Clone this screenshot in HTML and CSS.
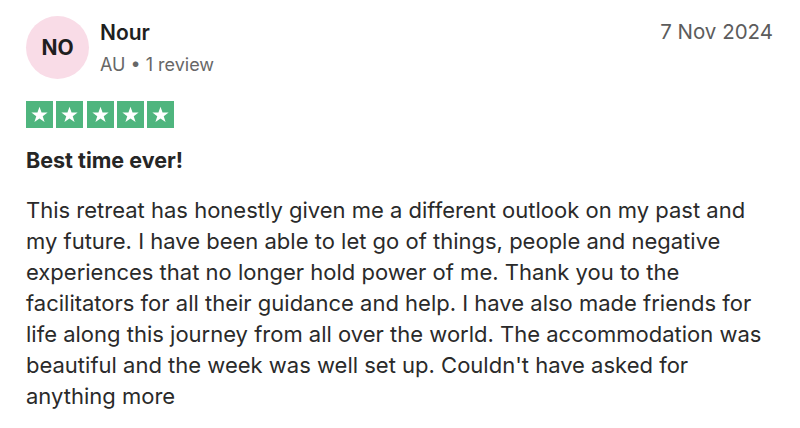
FILE: index.html
```html
<!DOCTYPE html>
<html lang="en">
<head>
<meta charset="utf-8">
<title>Review</title>
<link rel="stylesheet" href="styles.css">
</head>
<body>
<article class="review">
  <header class="head">
    <div class="avatar">NO</div>
    <div class="who">
      <div class="name">Nour</div>
      <div class="meta">AU • 1 review</div>
    </div>
    <time class="date">7 Nov 2024</time>
  </header>
  <div class="stars">
    <span class="star"><svg viewBox="0 0 24 24"><path d="M12 3.2l2.35 6.6h6.95l-5.6 4.1 2.1 6.8L12 16.55 6.2 20.7l2.1-6.8-5.6-4.1h6.95z"/></svg></span>
    <span class="star"><svg viewBox="0 0 24 24"><path d="M12 3.2l2.35 6.6h6.95l-5.6 4.1 2.1 6.8L12 16.55 6.2 20.7l2.1-6.8-5.6-4.1h6.95z"/></svg></span>
    <span class="star"><svg viewBox="0 0 24 24"><path d="M12 3.2l2.35 6.6h6.95l-5.6 4.1 2.1 6.8L12 16.55 6.2 20.7l2.1-6.8-5.6-4.1h6.95z"/></svg></span>
    <span class="star"><svg viewBox="0 0 24 24"><path d="M12 3.2l2.35 6.6h6.95l-5.6 4.1 2.1 6.8L12 16.55 6.2 20.7l2.1-6.8-5.6-4.1h6.95z"/></svg></span>
    <span class="star"><svg viewBox="0 0 24 24"><path d="M12 3.2l2.35 6.6h6.95l-5.6 4.1 2.1 6.8L12 16.55 6.2 20.7l2.1-6.8-5.6-4.1h6.95z"/></svg></span>
  </div>
  <h2 class="title">Best time ever!</h2>
  <p class="body">This retreat has honestly given me a different outlook on my past and my future. I have been able to let go of things, people and negative experiences that no longer hold power of me. Thank you to the facilitators for all their guidance and help. I have also made friends for life along this journey from all over the world. The accommodation was beautiful and the week was well set up. Couldn't have asked for anything more</p>
</article>
</body>
</html>
```

FILE: styles.css
```css
* { box-sizing: border-box; }
html, body {
  margin: 0;
  padding: 0;
  background: #ffffff;
}
body {
  font-family: Inter, "Noto Sans", "Liberation Sans", sans-serif;
  color: #262626;
}
.review {
  width: 800px;
  padding: 16px 26px 0 26px;
}
.head {
  display: flex;
  align-items: flex-start;
}
.avatar {
  width: 63px;
  height: 63px;
  border-radius: 50%;
  background: #f9dce7;
  display: flex;
  align-items: center;
  justify-content: center;
  font-weight: 700;
  font-size: 21px;
  color: #1f1f1f;
  flex: none;
}
.who {
  margin-left: 11px;
  padding-top: 4px;
  flex: 1;
}
.name {
  font-size: 21px;
  font-weight: 600;
  line-height: 26px;
  color: #1f1f1f;
}
.meta {
  font-size: 18px;
  line-height: 24px;
  margin-top: 7px;
  color: #676767;
}
.date {
  font-size: 20.5px;
  line-height: 26px;
  padding-top: 3px;
  color: #5c5c5c;
  margin-right: 1px;
}
.stars {
  display: flex;
  gap: 3.3px;
  margin-top: 22px;
}
.star {
  width: 27px;
  height: 27px;
  background: #4fb57e;
  display: flex;
  align-items: center;
  justify-content: center;
}
.star svg {
  width: 21px;
  height: 21px;
  fill: #ffffff;
}
.title {
  margin: 18px 0 0 0;
  font-size: 21.5px;
  font-weight: 700;
  line-height: 28px;
  color: #262626;
}
.body {
  margin: 21px 0 0 0;
  font-size: 22px;
  line-height: 31px;
  color: #2a2a2a;
  width: 750px;
}
```
